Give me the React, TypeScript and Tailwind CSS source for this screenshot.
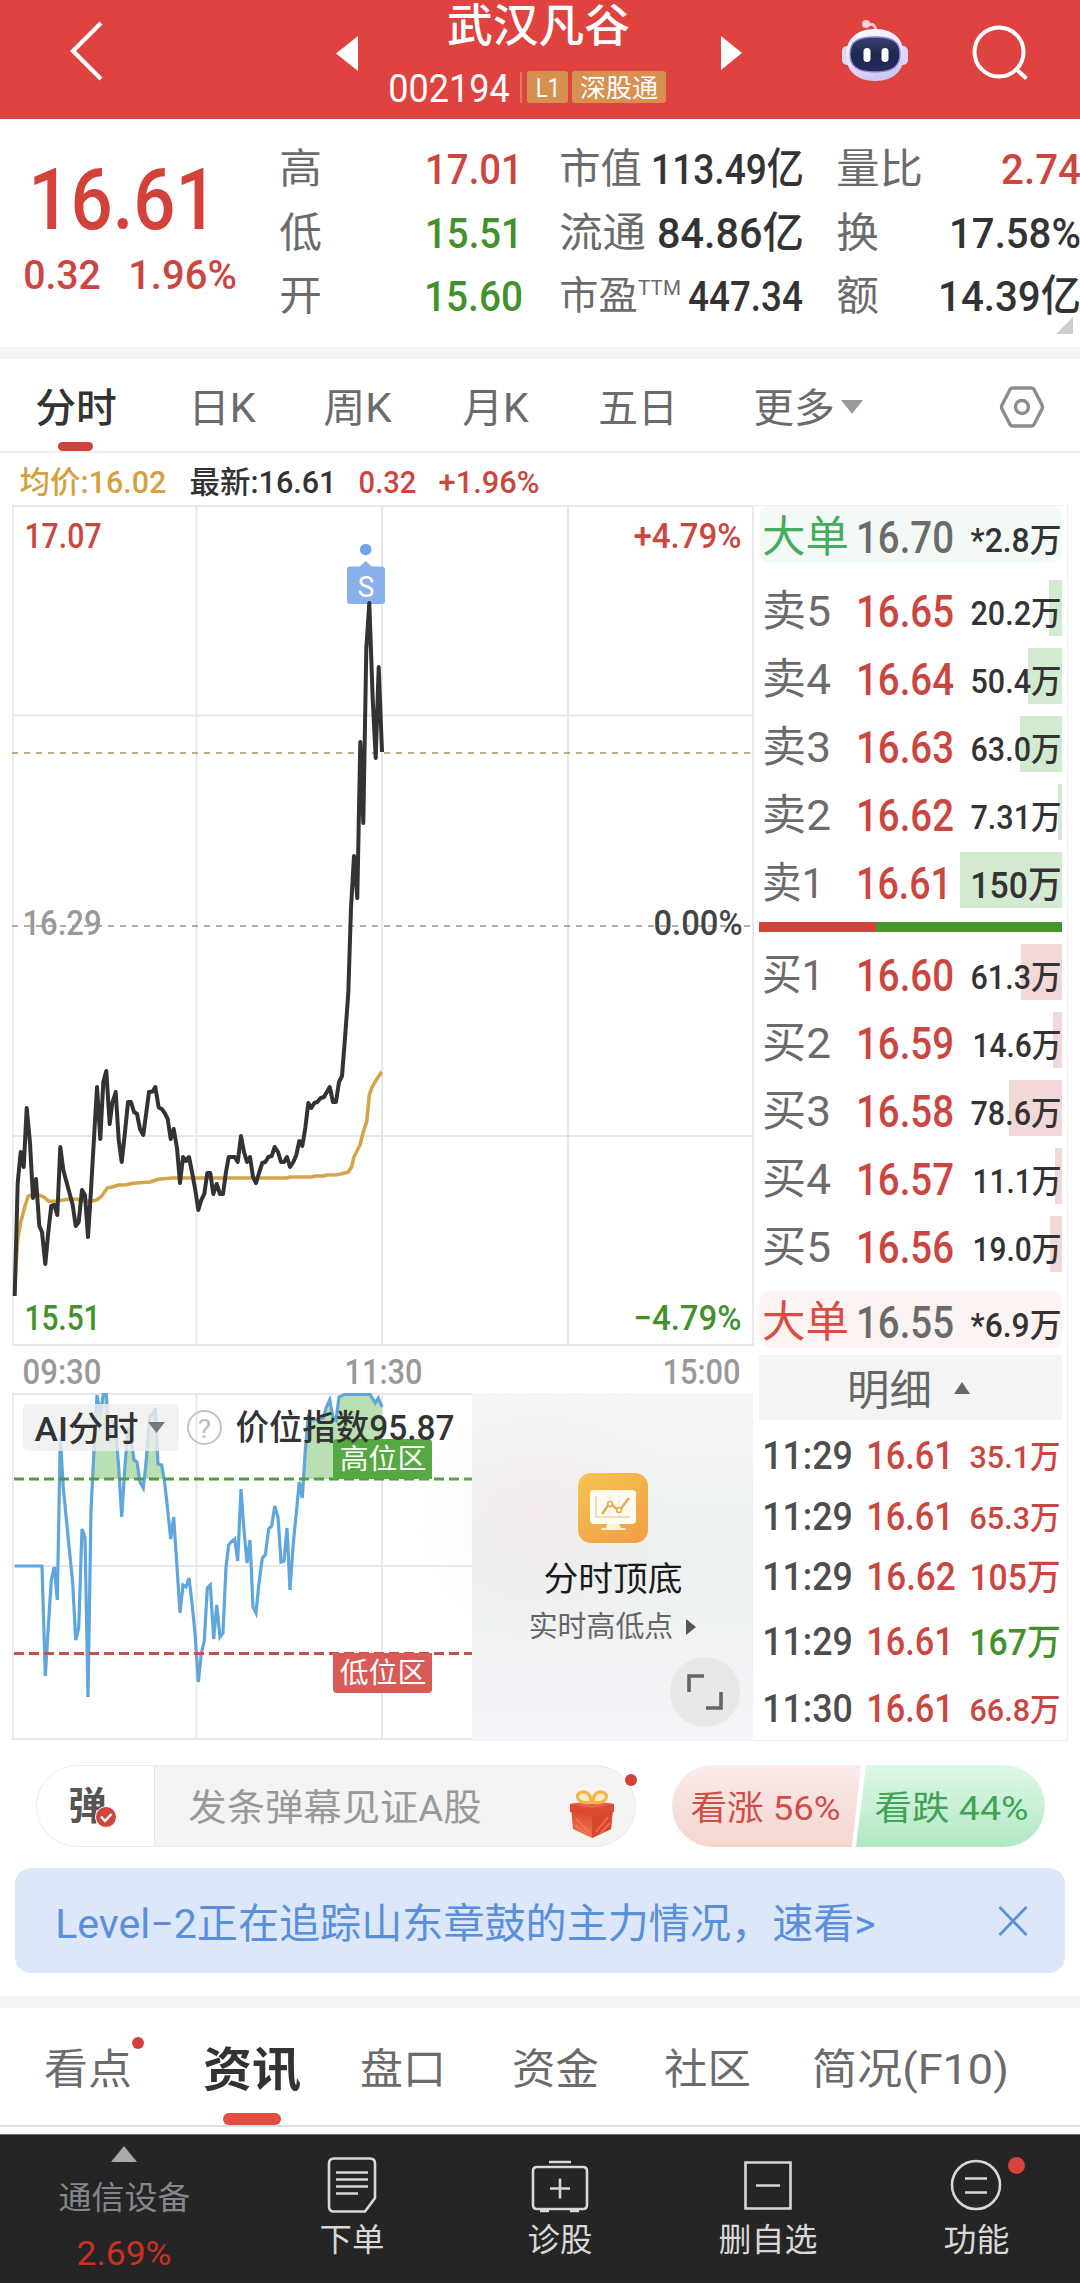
import { useLayoutEffect, useRef, type ReactNode } from 'react';

type FitProps = { w: number; className?: string; children: ReactNode };

/** Single line of text condensed or stretched so that its ink fills `w` pixels. */
function Fit({ w, className = '', children }: FitProps) {
  const ref = useRef<HTMLSpanElement>(null);
  useLayoutEffect(() => {
    const el = ref.current;
    if (!el) return;
    el.style.transform = 'none';
    const natural = el.getBoundingClientRect().width;
    const size = parseFloat(getComputedStyle(el).fontSize);
    const side = size * 0.045;
    el.style.transform = `translate(${-side}px, ${size * 0.04}px) scaleX(${(w + side * 2) / natural})`;
  }, [w, children]);
  return (
    <span className={`block shrink-0 whitespace-nowrap leading-none ${className}`} style={{ width: w }}>
      <span ref={ref} className="inline-block origin-left">
        {children}
      </span>
    </span>
  );
}

const RED = 'text-[#cb463f]';
const GREEN = 'text-[#43912b]';

function Header() {
  return (
    <header className="flex h-[119px] bg-[#de4340] text-white">
      <svg className="ml-[68px] mt-[18px] h-[66px] w-[38px] shrink-0" viewBox="0 0 38 66" fill="none" stroke="#fff" strokeWidth="4.200">
        <path d="M33 5 5 33l28 28" />
      </svg>
      <svg className="ml-[230px] mt-[36px] h-[35px] w-[22px] shrink-0" viewBox="0 0 22 35" fill="#fff">
        <path d="M22 0v35L0 17.500z" />
      </svg>
      <div className="ml-[30px] flex w-[280px] shrink-0 flex-col">
        <Fit w={179} className="ml-[61px] mt-[2px] text-[45px] font-medium">武汉凡谷</Fit>
        <div className="mt-[23px] flex h-[34px] items-center">
          <Fit w={118} className="ml-[2px] text-[38px]">002194</Fit>
          <span className="ml-[12px] h-[31px] w-[2px] bg-[#de7d51]" />
          <span className="ml-[5px] flex h-[32px] w-[41px] items-center justify-center rounded-[3px] bg-[#d8904f]">
            <Fit w={22} className="text-[26px]">L1</Fit>
          </span>
          <span className="ml-[4px] flex h-[32px] w-[94px] items-center justify-center rounded-[3px] bg-[#d8904f]">
            <Fit w={76} className="text-[25px]">深股通</Fit>
          </span>
        </div>
      </div>
      <svg className="ml-[53px] mt-[36px] h-[34px] w-[21px] shrink-0" viewBox="0 0 21 34" fill="#fff">
        <path d="M0 0v34l21-17z" />
      </svg>
      <svg className="ml-[99px] mt-[18px] h-[66px] w-[68px] shrink-0" viewBox="0 0 68 66">
        <defs>
          <linearGradient id="shell" x1="0" y1="0" x2=".35" y2="1">
            <stop offset="0" stopColor="#ffffff" />
            <stop offset=".55" stopColor="#ece6fb" />
            <stop offset="1" stopColor="#cfc8f6" />
          </linearGradient>
          <linearGradient id="visor" x1="0" y1="0" x2="0" y2="1">
            <stop offset="0" stopColor="#39416d" />
            <stop offset=".5" stopColor="#1f2750" />
            <stop offset="1" stopColor="#222a5c" />
          </linearGradient>
        </defs>
        <path d="M35 14c0-7-4-9-8-7" fill="none" stroke="#f6c8d0" strokeWidth="3" />
        <circle cx="25" cy="6" r="4" fill="#f7d3d9" />
        <rect x="1" y="28" width="12" height="19" rx="5" fill="#ddd8fa" />
        <rect x="55" y="28" width="12" height="19" rx="5" fill="#ddd8fa" />
        <path d="M34 11c20 0 29 12 29 26S54 63 34 63 5 51 5 37s9-26 29-26z" fill="url(#shell)" />
        <path d="M34 19c18 0 25 5 25 17s-7 18-25 18S9 48 9 36s7-17 25-17z" fill="url(#visor)" stroke="#8e84dd" strokeWidth="1.400" />
        <rect x="22.500" y="30" width="7" height="14" rx="3.500" fill="#fff" />
        <rect x="40.500" y="30" width="7" height="14" rx="3.500" fill="#fff" />
      </svg>
      <svg className="ml-[62px] mt-[24px] h-[58px] w-[60px] shrink-0" viewBox="0 0 60 58" fill="none" stroke="#fff" strokeWidth="4">
        <circle cx="28" cy="28" r="24.500" />
        <path d="m45 45 10.500 9.500" />
      </svg>
    </header>
  );
}

function Quote() {
  const label = 'text-[#6b6b6b] text-[41px]';
  const num = 'text-[43px] font-medium';
  return (
    <section className="relative flex h-[228px]">
      <div className="w-[281px] shrink-0">
        <Fit w={182} className="ml-[32px] mt-[35px] text-[86px] font-medium text-[#d2423a]">16.61</Fit>
        <div className="mt-[13px] flex">
          <Fit w={74} className={`ml-[25px] text-[41px] font-medium ${RED}`}>0.32</Fit>
          <Fit w={105} className={`ml-[31px] text-[41px] font-medium ${RED}`}>1.96%</Fit>
        </div>
      </div>
      <div className="mt-[17px] w-[240px] shrink-0">
        {[
          ['高', '17.01', RED],
          ['低', '15.51', GREEN],
          ['开', '15.60', GREEN],
        ].map(([k, v, c]) => (
          <div key={k} className="flex h-[63.500px] items-center justify-between">
            <Fit w={39} className={label}>{k}</Fit>
            <Fit w={v.endsWith('1') ? 94 : 95} className={`${num} ${c}`}>{v}</Fit>
          </div>
        ))}
      </div>
      <div className="ml-[40px] mt-[17px] w-[241px] shrink-0 text-[#333]">
        <div className="flex h-[63.500px] items-center justify-between">
          <Fit w={79} className={label}>市值</Fit>
          <Fit w={149} className={num}>113.49亿</Fit>
        </div>
        <div className="flex h-[63.500px] items-center justify-between">
          <Fit w={83} className={label}>流通</Fit>
          <Fit w={143} className={num}>84.86亿</Fit>
        </div>
        <div className="flex h-[63.500px] items-center">
          <Fit w={75} className="text-[39px] text-[#6b6b6b]">市盈</Fit>
          <Fit w={41} className="mb-[14px] ml-[3px] text-[21px] text-[#6b6b6b]">TTM</Fit>
          <Fit w={111} className={`ml-[10px] ${num}`}>447.34</Fit>
        </div>
      </div>
      <div className="ml-[36px] mt-[17px] w-[241px] shrink-0 text-[#333]">
        <div className="flex h-[63.500px] items-center justify-between">
          <Fit w={83} className={label}>量比</Fit>
          <Fit w={76} className={`${num} ${RED}`}>2.74</Fit>
        </div>
        <div className="flex h-[63.500px] items-center justify-between">
          <Fit w={39} className={label}>换</Fit>
          <Fit w={128} className={num}>17.58%</Fit>
        </div>
        <div className="flex h-[63.500px] items-center justify-between">
          <Fit w={39} className={label}>额</Fit>
          <Fit w={139} className={num}>14.39亿</Fit>
        </div>
      </div>
      <svg className="absolute bottom-[13px] right-[7px] h-[17px] w-[17px]" viewBox="0 0 17 17" fill="#ccc">
        <path d="M17 0v17H0z" />
      </svg>
    </section>
  );
}

function PeriodTabs() {
  const tab = 'text-[40px] text-[#6b6b6b]';
  return (
    <nav className="relative flex h-[94px] items-center border-b-2 border-[#eeeeee] pt-[3px]">
      <Fit w={78} className="ml-[37px] text-[40px] font-medium text-[#333]">分时</Fit>
      <Fit w={64} className={`ml-[75px] ${tab}`}>日K</Fit>
      <Fit w={65} className={`ml-[71px] ${tab}`}>周K</Fit>
      <Fit w={63} className={`ml-[74px] ${tab}`}>月K</Fit>
      <Fit w={76} className={`ml-[73px] ${tab}`}>五日</Fit>
      <Fit w={78} className={`ml-[79px] ${tab}`}>更多</Fit>
      <svg className="ml-[8px] h-[14px] w-[22px] shrink-0" viewBox="0 0 22 14" fill="#9a9a9a">
        <path d="M0 0h22L11 14z" />
      </svg>
      <svg className="ml-[136px] h-[44px] w-[46px] shrink-0" viewBox="0 0 46 44" fill="none" stroke="#8c8c8c" strokeWidth="3.400" strokeLinejoin="round">
        <path d="M14 3h18q2 0 3 1.500l8 15.500q1 2 0 4l-8 15.500q-1 1.500-3 1.500H14q-2 0-3-1.500L3 24q-1-2 0-4l8-15.500Q12 3 14 3z" />
        <circle cx="23" cy="22" r="6.500" />
      </svg>
      <span className="absolute bottom-0 left-[58px] h-[9px] w-[35px] rounded-full bg-[#d2423a]" />
    </nav>
  );
}

const PRICE =
  '14.700,1296 17.700,1183 20.700,1152 23.700,1167 26.700,1108 30,1143 33,1198 36,1179 39.300,1226 42,1232 45.300,1264 48.300,1232 51.300,1206 54.300,1205 57.300,1215 60.300,1147 63.300,1170 72.700,1205 75.700,1226 78.700,1222 82,1190 85,1195 88,1237 91,1190 94.300,1133 97,1087 100.300,1139 103.300,1082 106.300,1071 109.700,1124 112.300,1103 115.700,1092 118.700,1140 121.700,1162 124.700,1135 128,1102 131,1102 134,1112 137,1114 140,1129 143.300,1135 149,1092 152.700,1091.500 155.300,1087 158.700,1107.500 161.700,1109 164.700,1113 167.700,1119 170.700,1139 173.700,1129 177,1148 180,1183 183,1157 186,1161 189,1157 192,1172 195.300,1190 198.300,1210 201.300,1200 204.300,1194 207.300,1173 210.300,1173 213.300,1194 216.700,1184 220,1194 223,1194 226,1172 228.700,1157 234.700,1157 237.700,1162 241,1136 244,1152 247,1162 250,1157 253,1177 256,1183 259,1173 262.300,1163 265.300,1162 268.300,1157 271.700,1156 274.700,1147 278,1152 281,1162 284,1162 287,1157 290,1167 293.300,1162 296.300,1155 299.300,1141 302.300,1146 305.300,1128 308.300,1103 311.300,1108 314.300,1103 317.300,1102 320.700,1098 324,1097 329.700,1087 333,1102 336,1102 339,1082 342,1076 345,1038 348.300,993 351,908 354,856 357.300,898 360.300,742 363.300,823 366.300,649 369.300,603 372.700,699 375.700,758 378.700,667 382,752';

const AVERAGE =
  '14.700,1290 16,1265 17.700,1240 20.700,1222 25,1206 28.300,1196 33,1195 40,1195.300 44.300,1197.300 49,1201.300 55,1201.300 68,1199.300 77,1199.300 82,1200.700 90,1201.300 96.700,1200 101.700,1196 107.300,1188 113.300,1186.700 118.300,1185 125,1185 133.300,1183.300 150,1182 158.300,1179.300 171.700,1178 286.700,1178 290,1177 311.700,1177 315,1176 323.300,1176 326.700,1175 336.700,1174.700 341.700,1173.700 348.300,1172 351.700,1166.700 354,1156.700 360,1145 363.300,1131.700 366.700,1121.700 369.300,1095 372.300,1086.700 376.700,1079.300 381.700,1071.700';

function PriceChart() {
  const label = 'text-[35px] font-medium absolute';
  return (
    <div className="relative h-[841px] w-[742px]">
      <svg className="block h-[841px] w-[742px]" viewBox="12 505 742 841" fill="none">
        <g stroke="#e8e8e8" strokeWidth="2">
          <path d="M12 506H754M12 715.500H752M12 1136H752M12 1345H754" />
          <path d="M12.500 506V1345M196.500 506V1345M382 506V1345M568 506V1345M753 506V1345" />
        </g>
        <path d="M12 753H752" stroke="#bfae85" strokeWidth="2" strokeDasharray="6 6" />
        <path d="M12 926H752" stroke="#adadad" strokeWidth="2.200" strokeDasharray="6 6" />
        <polyline points={AVERAGE} stroke="#d3a548" strokeWidth="3.600" strokeLinejoin="round" />
        <path d="m365.700 561 6 5.500H382q3 0 3 3V601q0 3-3 3H350q-3 0-3-3V569.500q0-3 3-3h9.700z" fill="#8ab0ec" />
        <circle cx="365.700" cy="549.500" r="5.800" fill="#73a0e6" />
        <polyline points={PRICE} stroke="#333" strokeWidth="4" strokeLinejoin="round" />
      </svg>
      <Fit w={14} className="absolute left-[347px] top-[67px] text-[29px] text-white">S</Fit>
      <Fit w={74} className={`left-[14px] top-[13px] ${label} ${RED}`}>17.07</Fit>
      <Fit w={105} className={`left-[623px] top-[13px] ${label} ${RED}`}>+4.79%</Fit>
      <Fit w={76} className={`left-[12px] top-[400px] ${label} text-[#999]`}>16.29</Fit>
      <Fit w={86} className={`left-[643px] top-[400px] ${label} text-[#444]`}>0.00%</Fit>
      <Fit w={73} className={`left-[14px] top-[795px] ${label} ${GREEN}`}>15.51</Fit>
      <Fit w={105} className={`left-[623px] top-[795px] ${label} ${GREEN}`}>−4.79%</Fit>
    </div>
  );
}

const INDEX =
  '14.700,1566 42,1566 45.300,1676 48.300,1627 51.300,1580 54.300,1567 57.300,1600 60.300,1437 63.300,1488 66.700,1523 72.700,1583 75.700,1640 78.700,1628 82,1529 85,1537 88,1697 91,1510 94,1450 97,1395 100.300,1415 103.300,1394.500 106.300,1394.500 109.300,1443 112.300,1423 115.700,1430 118.700,1467 121.700,1517 124.700,1470 128,1427 131,1437 134,1460 137,1462 140,1482 143.300,1488 146.300,1460 149.700,1416 152.700,1414 155.300,1408 158,1464 161.700,1465 164.700,1483 167.700,1510 170.700,1539 173.700,1517 177,1567 180,1613 183,1585 186,1587 189,1578 192,1603 195,1633 198.300,1682 201.300,1653 204.300,1641 207.300,1588 210.300,1585 213.700,1639 216.700,1605 220,1637 223,1633 226,1567 228.700,1545 231,1542 234.700,1539 237.700,1561 241,1489 244,1530 247,1563 250,1540 253,1607 256,1613 259,1583 262.300,1558 265.300,1555 268.700,1529 271.700,1526 274.700,1506 278,1517 281,1562 284,1561 287,1528 290,1590 293.300,1543 296.300,1513 299.300,1482 302.300,1498 305.300,1450 308.300,1417 311.300,1420 323.300,1418 326,1408 329.700,1400 333,1417 336,1420 339,1397 345,1394.300 370,1394.300 375.300,1403 378.300,1398 382,1407';

function IndexChart() {
  return (
    <div className="relative h-[348px] w-[460px] shrink-0">
      <svg className="block h-[348px] w-[460px]" viewBox="12 1393 460 348" fill="none">
        <defs>
          <clipPath id="above">
            <rect x="70" y="1393" width="400" height="86" />
          </clipPath>
        </defs>
        <g stroke="#e8e8e8" strokeWidth="2">
          <path d="M12 1394H472M12 1566H472M12 1739H472M12.500 1394V1740M196.500 1394V1739M382 1394V1739" />
        </g>
        <polygon points={`14.700,1566 ${INDEX} 382,1566`} fill="#b9dfb3" clipPath="url(#above)" />
        <polyline points={INDEX} stroke="#5fa6dd" strokeWidth="3.200" />
        <path d="M14 1479H472" stroke="#4f9f3c" strokeWidth="3" strokeDasharray="10 5" />
        <path d="M14 1653.500H472" stroke="#c2504c" strokeWidth="3" strokeDasharray="10 5" />
      </svg>
      <span className="absolute left-[321px] top-[46px] flex h-[40px] w-[99px] items-center justify-center rounded-t-[4px] bg-[#56a843]">
        <Fit w={84} className="text-[28px] text-white">高位区</Fit>
      </span>
      <span className="absolute left-[321px] top-[260px] flex h-[40px] w-[99px] items-center justify-center rounded-b-[4px] bg-[#d95b58]">
        <Fit w={84} className="text-[28px] text-white">低位区</Fit>
      </span>
      <div className="absolute left-[11px] top-[11px] flex h-[47px] items-center">
        <div className="flex h-[47px] w-[156px] items-center rounded-[5px] bg-[#efefef]/80">
          <Fit w={101} className="ml-[13px] text-[34px] font-medium text-[#333]">AI分时</Fit>
          <svg className="ml-[11px] h-[11px] w-[17px]" viewBox="0 0 17 11" fill="#777">
            <path d="M0 0h17L8.500 11z" />
          </svg>
        </div>
        <span className="ml-[8px] flex size-[35px] items-center justify-center rounded-full border-2 border-[#c4c4c4]">
          <Fit w={11} className="text-[26px] text-[#bbb]">?</Fit>
        </span>
        <Fit w={216} className="ml-[15px] text-[35px] font-medium text-[#333]">价位指数95.87</Fit>
      </div>
    </div>
  );
}

function Promo() {
  return (
    <div className="relative flex h-[348px] w-[281px] shrink-0 flex-col items-center bg-linear-to-b from-[#f6f6f6] via-[#edf1f1] to-[#f5f4f8]">
      <span className="absolute left-[10px] top-[70px] h-[110px] w-[120px] rounded-full bg-[#f6e4e7]/70 blur-2xl" />
      <svg className="relative mt-[80px] h-[70px] w-[70px]" viewBox="0 0 70 70">
        <defs>
          <linearGradient id="tile" x1="0" y1="0" x2=".7" y2="1">
            <stop offset="0" stopColor="#f6c455" />
            <stop offset="1" stopColor="#f0a245" />
          </linearGradient>
        </defs>
        <rect width="70" height="70" rx="13" fill="url(#tile)" />
        <rect x="12" y="17" width="46" height="34" rx="4" fill="#fffaf0" />
        <path d="M29 51h12l2 4h3q2 0 2 2H23q0-2 2-2h3z" fill="#fff3dc" />
        <path d="M18 23v21h34" fill="none" stroke="#ecd2ab" strokeWidth="1.500" />
        <path d="M32 22v22M41 22v22" stroke="#f0d9b4" strokeWidth="1" strokeDasharray="3 2" />
        <path d="m24 41 8-11 9 8 10-13" fill="none" stroke="#eba94c" strokeWidth="2.400" />
        <circle cx="32" cy="31" r="2.500" fill="#fffaf0" stroke="#eba94c" strokeWidth="1.600" />
        <circle cx="41" cy="37" r="2.500" fill="#fffaf0" stroke="#eba94c" strokeWidth="1.600" />
      </svg>
      <Fit w={136} className="relative mt-[18px] text-[34px] text-[#1a1a1a]">分时顶底</Fit>
      <div className="relative mt-[17px] flex items-center">
        <Fit w={142} className="text-[29px] text-[#666]">实时高低点</Fit>
        <svg className="ml-[14px] h-[16px] w-[10px]" viewBox="0 0 10 16" fill="#555">
          <path d="M0 0 10 8 0 16z" />
        </svg>
      </div>
      <span className="absolute bottom-[14px] right-[13px] flex size-[70px] items-center justify-center rounded-full bg-[#e8e8e8]">
        <svg className="h-[38px] w-[38px]" viewBox="0 0 38 38" fill="none" stroke="#666" strokeWidth="3.600">
          <path d="M3 19V3h15M35 19v16H20" />
        </svg>
      </span>
    </div>
  );
}

type Level = [name: string, price: string, volume: string, bar: number];

const SELLS: Level[] = [
  ['卖5', '16.65', '20.2万', 13],
  ['卖4', '16.64', '50.4万', 34],
  ['卖3', '16.63', '63.0万', 42],
  ['卖2', '16.62', '7.31万', 4],
  ['卖1', '16.61', '150万', 102],
];

const BUYS: Level[] = [
  ['买1', '16.60', '61.3万', 41],
  ['买2', '16.59', '14.6万', 9],
  ['买3', '16.58', '78.6万', 53],
  ['买4', '16.57', '11.1万', 7],
  ['买5', '16.56', '19.0万', 12],
];

function Volume({ value, w = 88, size }: { value: string; w?: number; size?: string }) {
  return <Fit w={w} className={`ml-auto mr-[2px] mt-[8px] font-medium ${size ?? 'text-[33px]'}`}>{value}</Fit>;
}

function LevelRow({ level, tint }: { level: Level; tint: string }) {
  const [name, price, volume, bar] = level;
  const narrow = volume.startsWith('1') && volume.length === 5;
  return (
    <div className="relative flex h-[68px] items-center text-[#333]">
      <span className={`absolute right-0 top-[6px] h-[56px] ${tint}`} style={{ width: bar }} />
      <Fit w={name.endsWith('1') ? 58 : 65} className="relative ml-[5px] mt-[3px] text-[43px] text-[#6b6b6b]">{name}</Fit>
      <div className="relative ml-auto mr-[20px] mt-[3px] w-[94px]">
        <Fit w={price.endsWith('1') ? 92 : 94} className={`text-[44px] font-medium ${RED}`}>{price}</Fit>
      </div>
      <div className="relative flex w-[90px]">
        <Volume value={volume} w={narrow ? 86 : 88} size={volume.length === 4 ? 'text-[37px]' : undefined} />
      </div>
    </div>
  );
}

function BigOrder({ price, volume, tint, color }: { price: string; volume: string; tint: string; color: string }) {
  return (
    <div className={`flex h-[57px] items-center rounded-[10px] pt-[2px] text-[#333] ${tint}`}>
      <Fit w={83} className={`ml-[5px] text-[43px] ${color}`}>大单</Fit>
      <Fit w={94} className="ml-[11px] text-[44px] font-medium text-[#6b6b6b]">{price}</Fit>
      <Volume value={volume} />
    </div>
  );
}

const TRADES: [string, string, string, string, string][] = [
  ['11:29', '16.61', '35.1万', RED, 'h-[62px]'],
  ['11:29', '16.61', '65.3万', RED, 'h-[60px]'],
  ['11:29', '16.62', '105万', RED, 'h-[61px]'],
  ['11:29', '16.61', '167万', GREEN, 'h-[69px]'],
  ['11:30', '16.61', '66.8万', RED, 'h-[64px]'],
];

function OrderBook() {
  return (
    <aside className="h-[1236px] w-[314px] border border-l-0 border-[#eeeeee] pl-[5px] pr-[5px]">
      <BigOrder price="16.70" volume="*2.8万" tint="bg-[#f3faf6]" color="text-[#45ac5f]" />
      <div className="mt-[11px]">
        {SELLS.map((l) => <LevelRow key={l[0]} level={l} tint="bg-[#d3ead0]" />)}
      </div>
      <div className="mt-[8px] flex h-[10px]">
        <span className="w-[117px] bg-[#d2423a]" />
        <span className="grow bg-[#43972b]" />
      </div>
      <div className="mt-[6px]">
        {BUYS.map((l) => <LevelRow key={l[0]} level={l} tint="bg-[#f2d8d7]" />)}
      </div>
      <div className="mt-[13px]">
        <BigOrder price="16.55" volume="*6.9万" tint="bg-[#fdf3f2]" color="text-[#d94c3f]" />
      </div>
      <div className="mt-[7px] flex h-[65px] items-center bg-[#f4f4f4]">
        <Fit w={81} className="ml-[90px] mt-[2px] text-[42px] text-[#666]">明细</Fit>
        <svg className="ml-[24px] h-[12px] w-[16px]" viewBox="0 0 16 12" fill="#666">
          <path d="M0 12h16L8 0z" />
        </svg>
      </div>
      <div className="mt-[3px]">
        {TRADES.map(([time, price, vol, color, h], i) => (
          <div key={i} className={`flex items-center ${h}`}>
            <Fit w={87} className="ml-[5px] text-[39px] font-medium text-[#4d4d4d]">{time}</Fit>
            <Fit w={price.endsWith('1') ? 84 : 86} className={`ml-[17px] text-[39px] font-medium ${RED}`}>{price}</Fit>
            <Fit w={88} className={`ml-auto mr-[3px] mt-[3px] font-medium ${color} ${vol.length === 4 ? 'text-[36px]' : 'text-[32px]'}`}>{vol}</Fit>
          </div>
        ))}
      </div>
    </aside>
  );
}

function Market() {
  return (
    <section className="flex h-[1236px] pl-[12px]">
      <div className="w-[742px] shrink-0">
        <PriceChart />
        <div className="flex h-[47px] items-center pt-[3px] text-[35px] font-medium text-[#999]">
          <Fit w={76} className="ml-[12px]">09:30</Fit>
          <Fit w={75} className="ml-[246px]">11:30</Fit>
          <Fit w={75} className="ml-[243px]">15:00</Fit>
        </div>
        <div className="flex">
          <IndexChart />
          <Promo />
        </div>
      </div>
      <OrderBook />
    </section>
  );
}

function CommentBar() {
  return (
    <section className="mt-[24px] flex h-[82px] pl-[36px]">
      <div className="relative flex w-[600px] items-center rounded-full border border-[#ebebeb] bg-[#f4f4f4]">
        <div className="relative flex h-full w-[118px] items-center rounded-l-full border-r border-[#e6e6e6] bg-white">
          <Fit w={35} className="mb-[5px] ml-[33px] text-[38px] font-bold text-[#555]">弹</Fit>
          <svg className="absolute left-[58px] top-[40px] size-[22px]" viewBox="0 0 22 22">
            <circle cx="11" cy="11" r="10.500" fill="#d0453c" stroke="#fff" />
            <path d="m6 10.500 4 4.500 6.500-7" fill="none" stroke="#fff" strokeWidth="2.500" />
          </svg>
        </div>
        <Fit w={290} className="ml-[35px] mt-[2px] text-[37px] text-[#999]">发条弹幕见证A股</Fit>
        <svg className="ml-[88px] mt-[16px] h-[50px] w-[48px]" viewBox="0 0 48 50">
          <defs>
            <linearGradient id="box" x1="0" y1="0" x2="0" y2="1">
              <stop offset="0" stopColor="#d9452f" />
              <stop offset="1" stopColor="#ee7350" />
            </linearGradient>
          </defs>
          <path d="M3 18h42l-2 22-19 9L5 40z" fill="url(#box)" />
          <path d="M24 22l21-4-2 22-19 9z" fill="#d9472f" />
          <path d="M2 15l22-3 22 3v8l-22 5L2 23z" fill="#dc4a33" />
          <path d="M2 15l22-3 22 3-22 4z" fill="#e96448" />
          <path d="M8 30l13 13M7 36l11 9M40 28l-12 15M42 34l-10 11" stroke="#f08a5e" strokeWidth="2" opacity=".6" />
          <path d="M24 13C8 16 6 4 14 3c6-1 9 5 10 10 1-5 4-11 10-10 8 1 6 13-10 10z" fill="#fdebc0" stroke="#f2b64c" strokeWidth="3.200" />
          <circle cx="24" cy="12" r="3" fill="#f2b64c" />
        </svg>
        <span className="absolute -right-[2px] top-[8px] size-[12px] rounded-full bg-[#d2423a]" />
      </div>
      <div className="ml-[36px] flex h-[82px] w-[189px] items-center rounded-l-full bg-linear-to-b from-[#fbebea] to-[#f5d5d1] pt-[2px] [clip-path:polygon(0_0,100%_0,180px_100%,0_100%)]">
        <Fit w={147} className="ml-[20px] text-[34px] text-[#cf4f47]">看涨 56%</Fit>
      </div>
      <div className="-ml-[5px] flex h-[82px] w-[189px] items-center rounded-r-full bg-linear-to-b from-[#dff8e8] to-[#b0e8c3] pt-[2px] [clip-path:polygon(10px_0,100%_0,100%_100%,0_100%)]">
        <Fit w={151} className="ml-[20px] text-[34px] text-[#42a357]">看跌 44%</Fit>
      </div>
    </section>
  );
}

function Banner() {
  return (
    <section className="mx-[15px] mt-[21px] flex h-[105px] items-center rounded-[16px] bg-[#dce7f9] text-[#5a8fdb]">
      <Fit w={817} className="ml-[42px] mt-[3px] text-[41px]">Level−2正在追踪山东章鼓的主力情况，速看&gt;</Fit>
      <svg className="ml-[123px] size-[32px] shrink-0" viewBox="0 0 32 32" stroke="currentColor" strokeWidth="2.800" fill="none">
        <path d="m2.500 2 27 28M29.500 2l-27 28" />
      </svg>
    </section>
  );
}

function InfoTabs() {
  const tab = 'text-[42px] text-[#6b6b6b]';
  return (
    <nav className="relative flex h-[119px] items-center border-b-2 border-[#dedede] pt-[2px]">
      <Fit w={84} className={`ml-[46px] ${tab}`}>看点</Fit>
      <Fit w={94} className="ml-[75px] text-[47px] font-bold text-[#333]">资讯</Fit>
      <Fit w={82} className={`ml-[63px] ${tab}`}>盘口</Fit>
      <Fit w={83} className={`ml-[70px] ${tab}`}>资金</Fit>
      <Fit w={83} className={`ml-[69px] ${tab}`}>社区</Fit>
      <Fit w={193} className={`ml-[65px] ${tab}`}>简况(F10)</Fit>
      <span className="absolute left-[132px] top-[29px] size-[12px] rounded-full bg-[#d2423a]" />
      <span className="absolute bottom-0 left-[223px] h-[12px] w-[58px] rounded-full bg-[#e14d40]" />
    </nav>
  );
}

function NavItem({ label, w, children, badge }: { label: string; w: number; children: ReactNode; badge?: boolean }) {
  return (
    <div className="relative flex w-[208px] shrink-0 flex-col items-center text-[#d8d8d8]">
      <svg className="mt-[20px] h-[60px] w-[64px]" viewBox="0 0 64 60" fill="none" stroke="currentColor" strokeWidth="2.600">
        {children}
      </svg>
      <Fit w={w} className="mt-[8px] text-[32px]">{label}</Fit>
      {badge && <span className="absolute left-[136px] top-[22px] size-[17px] rounded-full bg-[#d8433b]" />}
    </div>
  );
}

function BottomNav() {
  return (
    <footer className="mt-[7px] flex h-[149px] border-t border-[#6a6a6a] bg-[#252525]">
      <div className="flex w-[248px] shrink-0 flex-col items-center">
        <svg className="mt-[11px] h-[16px] w-[26px]" viewBox="0 0 26 16" fill="#aaa">
          <path d="M0 16h26L13 0z" />
        </svg>
        <Fit w={129} className="mt-[19px] text-[32px] text-[#85858c]">通信设备</Fit>
        <Fit w={92} className="mt-[22px] text-[34px] text-[#cc2f20]">2.69%</Fit>
      </div>
      <NavItem label="下单" w={62}>
        <path d="M14 3.500h36q5 0 5 5V43L45 56.500H14q-5 0-5-5v-43q0-5 5-5z" />
        <path d="M16 17.500h32M16 24.500h32M16 31.500h32M16 38.500h22" />
      </NavItem>
      <NavItem label="诊股" w={62}>
        <path d="M21 7h22M9 12h46q4 0 4 4v34q0 4-4 4H9q-4 0-4-4V16q0-4 4-4zM32 23.500v20M22 33.500h20M12 56h9M42 56h9" />
      </NavItem>
      <NavItem label="删自选" w={96}>
        <path d="M9.500 7.500h45v46h-45zM20 30.500h24" />
      </NavItem>
      <NavItem label="功能" w={63} badge>
        <circle cx="32" cy="30" r="24" />
        <path d="M21 23.500h22M21 37.500h22" />
      </NavItem>
    </footer>
  );
}

export default function App() {
  return (
    <main className="h-[2283px] w-[1080px] overflow-hidden bg-white font-['Roboto','Noto_Sans_CJK_SC',sans-serif]">
      <Header />
      <Quote />
      <div className="h-[12px] bg-[#f4f4f4]" />
      <PeriodTabs />
      <div className="flex h-[52px] items-center pt-[4px] text-[31px]">
        <Fit w={144} className="ml-[21px] font-medium text-[#d3a13f]">均价:16.02</Fit>
        <Fit w={144} className="ml-[26px] font-medium text-[#333]">最新:16.61</Fit>
        <Fit w={55} className={`ml-[25px] font-medium ${RED}`}>0.32</Fit>
        <Fit w={98} className={`ml-[25px] font-medium ${RED}`}>+1.96%</Fit>
      </div>
      <Market />
      <CommentBar />
      <Banner />
      <div className="mt-[23px] h-[12px] bg-[#f4f4f4]" />
      <InfoTabs />
      <BottomNav />
    </main>
  );
}
